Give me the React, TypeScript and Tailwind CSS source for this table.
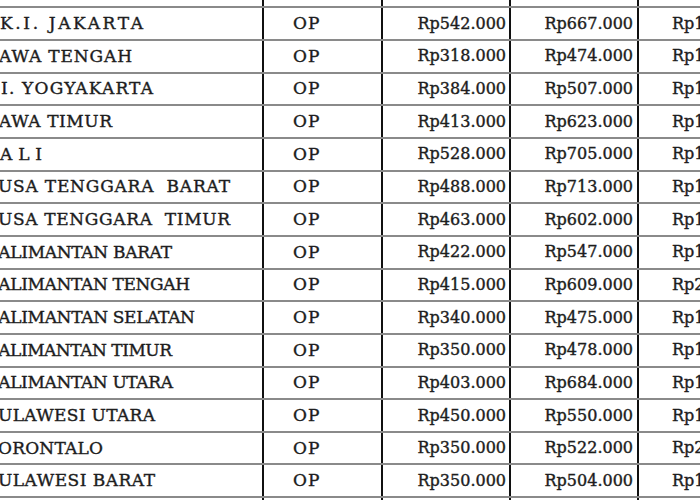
import React, { useMemo } from "react";

type Name = { full: string; hide: number; start: number; end: number };

const names: Name[] = [
  { full: "D.K.I. JAKARTA", hide: 2, start: 0, end: 143 },
  { full: "JAWA TENGAH", hide: 1, start: -1, end: 132 },
  { full: "D.I. YOGYAKARTA", hide: 2, start: 1, end: 153 },
  { full: "JAWA TIMUR", hide: 1, start: -1, end: 112 },
  { full: "B A L I", hide: 2, start: 0, end: 42 },
  { full: "NUSA TENGGARA  BARAT", hide: 1, start: -2, end: 230 },
  { full: "NUSA TENGGARA  TIMUR", hide: 1, start: -2, end: 230 },
  { full: "KALIMANTAN BARAT", hide: 1, start: -1, end: 172 },
  { full: "KALIMANTAN TENGAH", hide: 1, start: -1, end: 190 },
  { full: "KALIMANTAN SELATAN", hide: 1, start: -1, end: 195 },
  { full: "KALIMANTAN TIMUR", hide: 1, start: -1, end: 172 },
  { full: "KALIMANTAN UTARA", hide: 1, start: -1, end: 173 },
  { full: "SULAWESI UTARA", hide: 1, start: -2, end: 155 },
  { full: "GORONTALO", hide: 1, start: -2, end: 103 },
  { full: "SULAWESI BARAT", hide: 1, start: -2, end: 155 },
];

const prices: [string, string, string][] = [
  ["Rp542.000", "Rp667.000", "Rp1.100.000"],
  ["Rp318.000", "Rp474.000", "Rp1.000.000"],
  ["Rp384.000", "Rp507.000", "Rp1.000.000"],
  ["Rp413.000", "Rp623.000", "Rp1.000.000"],
  ["Rp528.000", "Rp705.000", "Rp1.100.000"],
  ["Rp488.000", "Rp713.000", "Rp1.100.000"],
  ["Rp463.000", "Rp602.000", "Rp1.100.000"],
  ["Rp422.000", "Rp547.000", "Rp1.100.000"],
  ["Rp415.000", "Rp609.000", "Rp2.000.000"],
  ["Rp340.000", "Rp475.000", "Rp1.100.000"],
  ["Rp350.000", "Rp478.000", "Rp1.100.000"],
  ["Rp403.000", "Rp684.000", "Rp1.100.000"],
  ["Rp450.000", "Rp550.000", "Rp1.100.000"],
  ["Rp350.000", "Rp522.000", "Rp2.000.000"],
  ["Rp350.000", "Rp504.000", "Rp1.100.000"],
];

// left edge of the name cell in page coordinates
const CELL_LEFT = -24;

function useNameLayout() {
  return useMemo(() => {
    let ctx: CanvasRenderingContext2D | null = null;
    if (typeof document !== "undefined") {
      ctx = document.createElement("canvas").getContext("2d");
      if (ctx) ctx.font = '17px "DejaVu Serif"';
    }
    return names.map((n) => {
      if (!ctx) return { ml: 6, ls: 1 };
      const W = ctx.measureText(n.full).width;
      const P = ctx.measureText(n.full.slice(0, n.hide)).width;
      const count = n.full.length - n.hide;
      const ls = (n.end - n.start - (W - P)) / (count - 1);
      const x0 = n.start - P - n.hide * ls;
      return { ml: x0 - CELL_LEFT, ls };
    });
  }, []);
}

const vline = "border-r-2 border-[#101010]";

export default function App() {
  const layout = useNameLayout();
  return (
    <div className="w-[700px] h-[500px] overflow-hidden bg-white">
      <div
        className="ml-[-24px] flex flex-col text-[16px] leading-none text-[#1a1a1a] [-webkit-text-stroke:0.4px_#262626]"
        style={{ fontFamily: '"DejaVu Serif", serif' }}
      >
        <div className="flex h-[6.3px] shrink-0">
          <div className={`w-[288px] shrink-0 ${vline}`} />
          <div className={`w-[119px] shrink-0 ${vline}`} />
          <div className={`w-[128px] shrink-0 ${vline}`} />
          <div className={`w-[128px] shrink-0 ${vline}`} />
        </div>
        {names.map((n, i) => (
          <div
            key={i}
            className="flex h-[32.67px] shrink-0 border-t-2 border-[#8a8a8a]"
          >
            <div
              className={`w-[288px] shrink-0 ${vline} flex items-center whitespace-pre overflow-hidden text-[17px]`}
            >
              <span
                style={{
                  marginLeft: layout[i].ml,
                  letterSpacing: layout[i].ls,
                }}
              >
                {n.full}
              </span>
            </div>
            <div
              className={`w-[119px] shrink-0 ${vline} pl-[29px] flex items-center text-[17px] tracking-[1px]`}
            >
              OP
            </div>
            <div
              className={`w-[128px] shrink-0 ${vline} pr-[3px] flex items-center justify-end`}
            >
              {prices[i][0]}
            </div>
            <div
              className={`w-[128px] shrink-0 ${vline} pr-[4px] flex items-center justify-end`}
            >
              {prices[i][1]}
            </div>
            <div className="w-[200px] shrink-0 pl-[33px] flex items-center whitespace-nowrap">
              {prices[i][2]}
            </div>
          </div>
        ))}
        <div className="flex h-[32.67px] shrink-0 border-t-2 border-[#8a8a8a]">
          <div className={`w-[288px] shrink-0 ${vline}`} />
          <div className={`w-[119px] shrink-0 ${vline}`} />
          <div className={`w-[128px] shrink-0 ${vline}`} />
          <div className={`w-[128px] shrink-0 ${vline}`} />
        </div>
      </div>
    </div>
  );
}
